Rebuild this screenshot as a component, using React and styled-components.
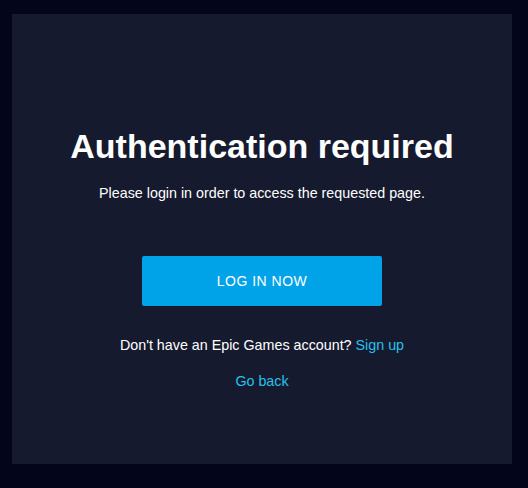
import React from "react";
import styled, { createGlobalStyle } from "styled-components";

const Global = createGlobalStyle`
  html, body { margin: 0; padding: 0; background: #03061a; }
  body { font-family: "Liberation Sans", Arial, sans-serif; }
`;

const Page = styled.div`
  padding: 14px 16px 24px 12px;
  box-sizing: border-box;
  width: 528px;
  height: 488px;
`;

const Card = styled.div`
  width: 500px;
  height: 450px;
  background: #161a2e;
  display: flex;
  flex-direction: column;
  align-items: center;
  padding-top: 112px;
  box-sizing: border-box;
  color: #fff;
`;

const Title = styled.h1`
  margin: 0;
  font-size: 34px;
  font-weight: bold;
  line-height: 40px;
`;

const Subtitle = styled.p`
  margin: 17px 0 0;
  font-size: 14.3px;
  line-height: 20px;
`;

const Button = styled.button`
  margin-top: 53px;
  width: 240px;
  height: 50px;
  border: none;
  border-radius: 2px;
  background: #00a2e8;
  color: #fff;
  font-family: "Liberation Sans", Arial, sans-serif;
  font-size: 14px;
  letter-spacing: 0.5px;
  cursor: pointer;
  box-shadow: 0 1px 0 rgba(0, 0, 0, 0.25);
`;

const Text = styled.p`
  margin: ${(p) => p.$mt}px 0 0;
  font-size: 14.3px;
  line-height: 20px;
`;

const Link = styled.a`
  color: #28c0ec;
  text-decoration: none;
`;

export default function App() {
  return (
    <>
      <Global />
      <Page>
        <Card>
          <Title>Authentication required</Title>
          <Subtitle>Please login in order to access the requested page.</Subtitle>
          <Button>LOG IN NOW</Button>
          <Text $mt={29}>
            Don't have an Epic Games account? <Link href="#">Sign up</Link>
          </Text>
          <Text $mt={16}>
            <Link href="#">Go back</Link>
          </Text>
        </Card>
      </Page>
    </>
  );
}
